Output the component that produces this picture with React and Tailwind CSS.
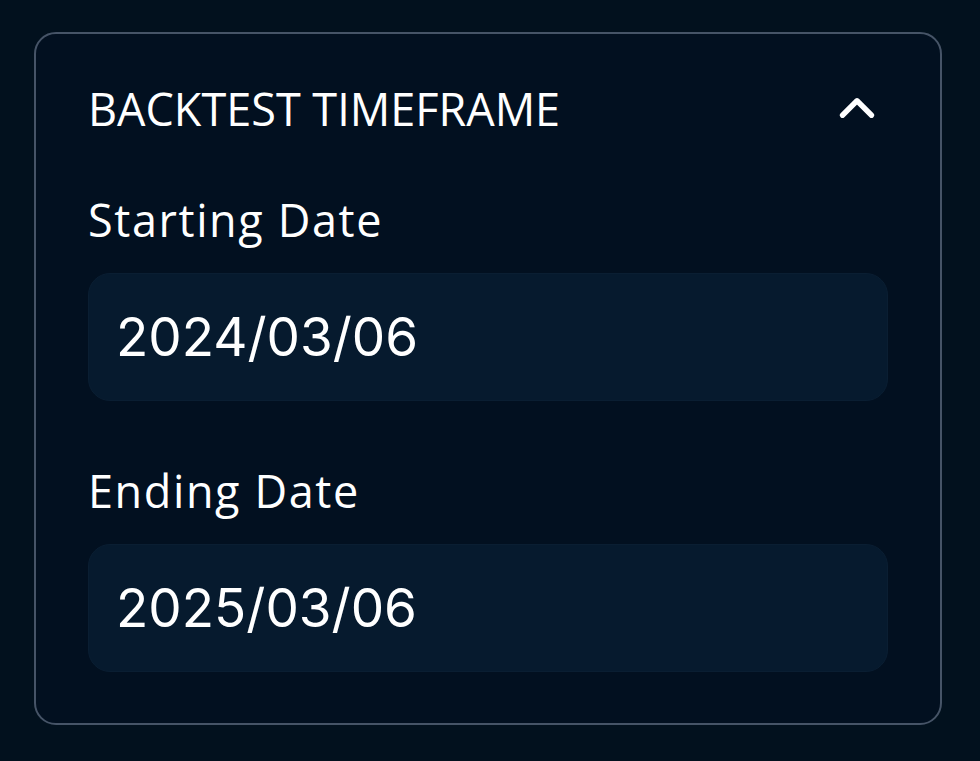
import React, { useState } from "react";
import { ChevronUp } from "lucide-react";

const labelFont = { fontFamily: '"Open Sans", "Liberation Sans", sans-serif' };

const DateField = ({ label, value, first }) => {
  return (
    <div className={first ? "mt-[59px]" : "mt-[67px]"}>
      <p className="text-[45px] leading-none tracking-[1.6px] text-white" style={labelFont}>
        {label}
      </p>
      <div className="mt-[31px] h-[128px] rounded-[22px] bg-[#061a2e] border border-[#0a1e32] flex items-center pl-[27px]">
        <span className="text-[53px] leading-none text-white font-[Inter,sans-serif]">
          {value}
        </span>
      </div>
    </div>
  );
};

const App = () => {
  const [open, setOpen] = useState(true);

  return (
    <div className="min-h-screen w-full bg-[#02111e] pt-[32px] px-[34px]">
      <div className="w-[908px] h-[693px] rounded-[22px] border-2 border-[#465467] bg-[#021020] px-[52px] pt-[44px]">
        <div className="h-[60px] flex items-center justify-between">
          <h2 className="text-[45px] leading-none text-white" style={labelFont}>
            BACKTEST TIMEFRAME
          </h2>
          <button onClick={() => setOpen(!open)} className="text-white mr-[2px]">
            <ChevronUp size={58} strokeWidth={2.2} />
          </button>
        </div>

        {open && (
          <>
            <DateField label="Starting Date" value="2024/03/06" first />
            <DateField label="Ending Date" value="2025/03/06" />
          </>
        )}
      </div>
    </div>
  );
};

export default App;
